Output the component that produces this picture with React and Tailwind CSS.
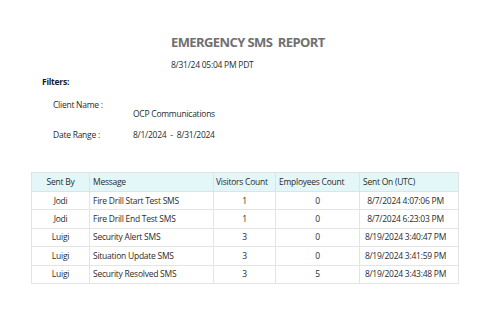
import React from "react";

const rows = [
  ["Jodi", "Fire Drill Start Test SMS", "1", "0", "8/7/2024 4:07:06 PM"],
  ["Jodi", "Fire Drill End Test SMS", "1", "0", "8/7/2024 6:23:03 PM"],
  ["Luigi", "Security Alert SMS", "3", "0", "8/19/2024 3:40:47 PM"],
  ["Luigi", "Situation Update SMS", "3", "0", "8/19/2024 3:41:59 PM"],
  ["Luigi", "Security Resolved SMS", "3", "5", "8/19/2024 3:43:48 PM"],
];

export default function App() {
  return (
    <div
      className="w-[500px] h-[329px] bg-white text-[#2b2b2b] overflow-hidden"
      style={{ fontFamily: '"Open Sans", "Noto Sans", sans-serif' }}
    >
      <div className="pt-[34px] pl-[171px]">
        <div className="text-[13px] leading-[16px] font-bold text-[#707070] whitespace-pre tracking-[-0.6px]">
          EMERGENCY SMS  REPORT
        </div>
        <div className="mt-[9px] text-[8.5px] leading-[12px] tracking-[-0.25px]">8/31/24 05:04 PM PDT</div>
      </div>
      <div className="mt-[5px] pl-[42px] text-[8.5px] leading-[12px] font-bold text-[#1a1a1a] tracking-[-0.25px]">Filters:</div>
      <div className="pl-[53px] text-[8.5px] leading-[12px] tracking-[-0.25px]">
        <div className="mt-[11px]">Client Name :</div>
        <div className="mt-[-3px] pl-[80px]">OCP Communications</div>
        <div className="mt-[9px] flex">
          <span className="w-[80px]">Date Range :</span>
          <span className="whitespace-pre">8/1/2024  -  8/31/2024</span>
        </div>
      </div>
      <div className="mt-[31px] pl-[31px]">
        <table className="border-collapse table-fixed text-[8.5px] leading-[12px] tracking-[-0.25px]">
          <colgroup>
            <col className="w-[58px]" />
            <col className="w-[124px]" />
            <col className="w-[62px]" />
            <col className="w-[84px]" />
            <col className="w-[99px]" />
          </colgroup>
          <thead>
            <tr className="h-[19px] bg-[#e3f6f8]">
              <th className="border border-[#dfe3e4] font-normal text-center p-0">Sent By</th>
              <th className="border border-[#dfe3e4] font-normal text-left pl-[3px] py-0">Message</th>
              <th className="border border-[#dfe3e4] font-normal text-left pl-[2px] py-0 whitespace-nowrap">Visitors Count</th>
              <th className="border border-[#dfe3e4] font-normal text-left pl-[3px] py-0 whitespace-nowrap">Employees Count</th>
              <th className="border border-[#dfe3e4] font-normal text-left pl-[3px] py-0 whitespace-nowrap">Sent On (UTC)</th>
            </tr>
          </thead>
          <tbody>
            {rows.map((r, i) => (
              <tr key={i} className="h-[18.4px]">
                <td className="border border-[#e4e4e4] text-center p-0">{r[0]}</td>
                <td className="border border-[#e4e4e4] text-left pl-[3px] py-0 whitespace-nowrap">{r[1]}</td>
                <td className="border border-[#e4e4e4] text-center p-0">{r[2]}</td>
                <td className="border border-[#e4e4e4] text-center p-0">{r[3]}</td>
                <td className="border border-[#e4e4e4] text-center pr-[7px] py-0 whitespace-nowrap">{r[4]}</td>
              </tr>
            ))}
          </tbody>
        </table>
      </div>
    </div>
  );
}
